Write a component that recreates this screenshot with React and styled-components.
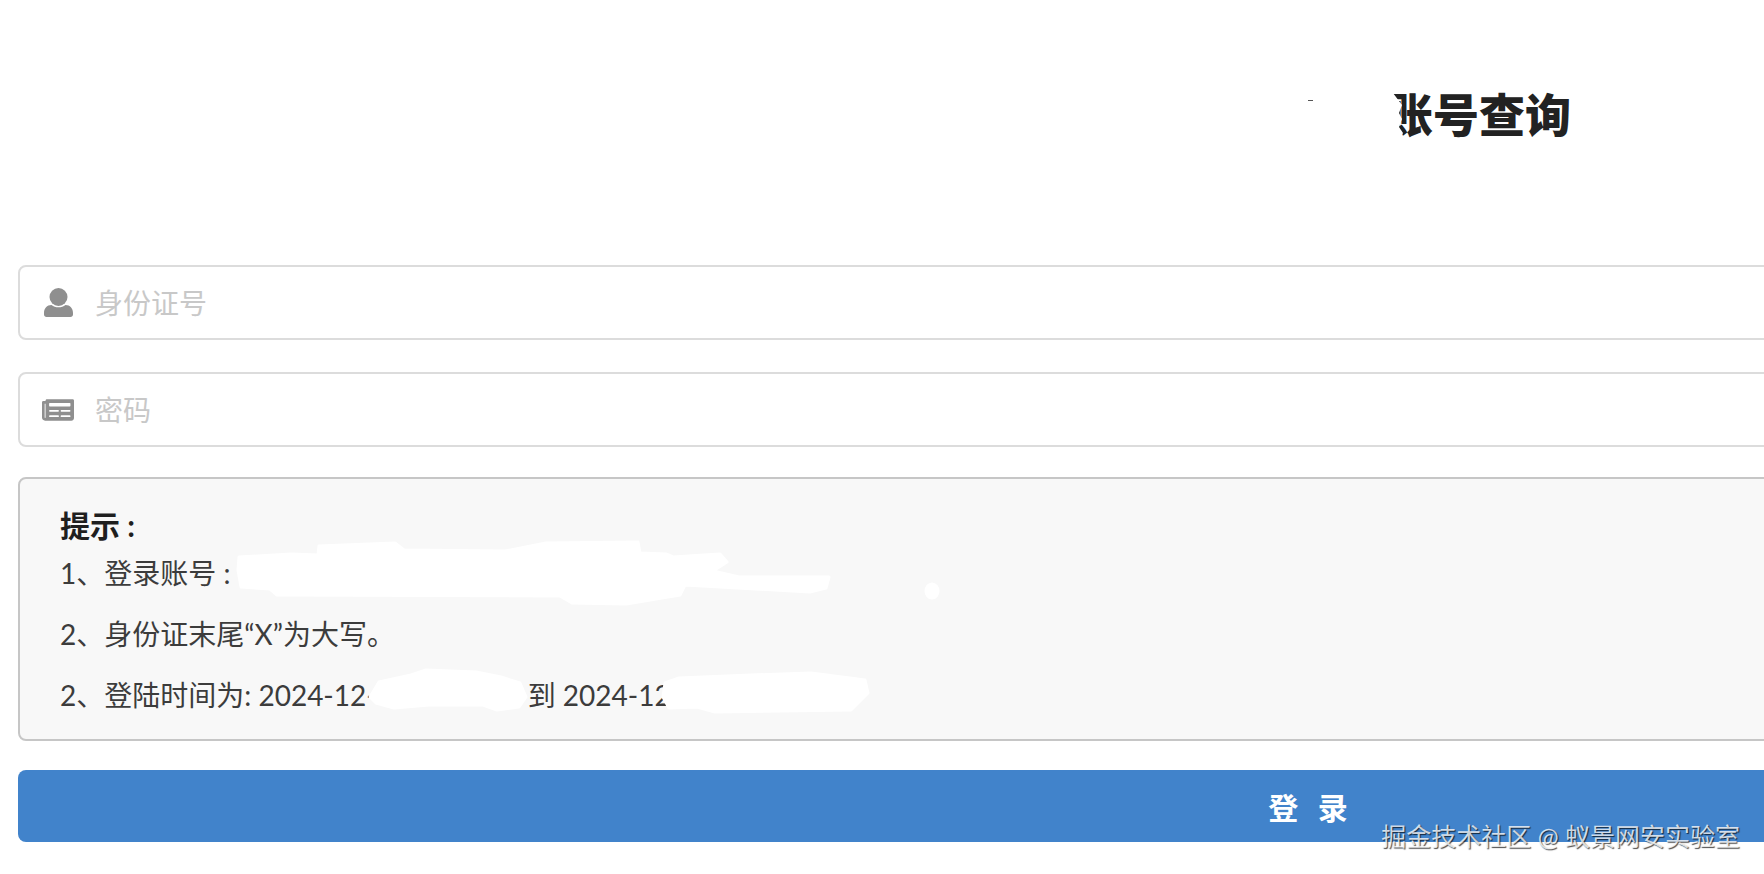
import React from "react";
import styled, { createGlobalStyle } from "styled-components";
import { FaNewspaper } from "react-icons/fa";

const FONT = `"Lato", "Noto Sans CJK SC", sans-serif`;

const GlobalStyle = createGlobalStyle`
  html, body {
    margin: 0;
    padding: 0;
    background: #fff;
    overflow: hidden;
  }
`;

const UserIcon = () => (
  <svg width="29" height="29" viewBox="0 0 29 29" fill="currentColor">
    <path d="M0 25C0 20.500 3 17 7.500 17C9.500 18.500 11.800 19.300 14.500 19.300C17.200 19.300 19.500 18.500 21.500 17C26 17 29 20.500 29 25V26.500C29 27.900 27.900 29 26.500 29H2.500C1.100 29 0 27.900 0 26.500Z" />
    <circle cx="14.500" cy="9" r="9" />
  </svg>
);

const App = () => {
  return (
    <Page>
      <GlobalStyle />
      <Form>
        <Title>
          账号查询
          <TitleMask viewBox="0 0 24 64" aria-hidden="true">
            <path d="M0 0H24V10H6L15 22L12 30L15 36L12 44L16 50L13 56L17 64H0Z" />
          </TitleMask>
          <Speck />
        </Title>
        <Field>
          <IconSlot>
            <UserIcon />
          </IconSlot>
          <Input placeholder="身份证号" />
        </Field>
        <Field>
          <IconSlot>
            <FaNewspaper size={32} />
          </IconSlot>
          <Input placeholder="密码" />
        </Field>
        <Message>
          <MessageHeader>提示 :</MessageHeader>
          <Line>1、登录账号 :</Line>
          <Line>2、身份证末尾“X”为大写。</Line>
          <Line>
            2、登陆时间为: 2024-12-
            <Gap />
            到 2024-12
          </Line>
          <Redactions viewBox="18 477 1000 264" aria-hidden="true">
            <path d="M239 557L291 554L318 555L319 546L395 543L404 550L505 551L546 543L638 542L640 553L666 554L673 557L720 554L727 562L713 571L739 577L829 577L826 588L810 592L685 585L680 595L626 604L572 603L560 596L277 595L270 589L241 587L238 570Z" />
            <ellipse cx="932" cy="591" rx="6" ry="7" />
            <path d="M370 697L379 682L411 675L426 670L476 672L501 677L520 683L526 697L519 707L497 710L483 705L429 705L394 708L376 703Z" />
            <path d="M663 697L665 683L679 678L751 675L811 673L865 680L868 693L851 710L715 712L697 707L669 708Z" />
          </Redactions>
        </Message>
        <SubmitButton type="button">登 录</SubmitButton>
      </Form>
      <Watermark>掘金技术社区 @ 蚁景网安实验室</Watermark>
    </Page>
  );
};

const Page = styled.div`
  position: relative;
  width: 1764px;
  height: 874px;
  overflow: hidden;
  padding: 83px 0 0 18px;
  box-sizing: border-box;
  font-family: ${FONT};
`;

const Form = styled.form`
  width: 2580px;
  display: flex;
  flex-direction: column;
  gap: 30px;
`;

const Title = styled.h1`
  position: relative;
  margin: 0 0 88px;
  padding-left: 1369px;
  font-size: 46px;
  line-height: 64px;
  font-weight: 900;
  color: #222;
`;

const TitleMask = styled.svg`
  position: absolute;
  left: 1369px;
  top: 0;
  width: 24px;
  height: 64px;
  fill: #fff;
`;

const Speck = styled.span`
  position: absolute;
  left: 1290px;
  top: 17px;
  width: 5px;
  height: 1px;
  background: #555;
`;

const Field = styled.label`
  display: flex;
  align-items: center;
  height: 75px;
  box-sizing: border-box;
  border: 2px solid #dcdcdc;
  border-radius: 8px;
  background: #fff;
  & + & {
    margin-top: 2px;
  }
`;

const IconSlot = styled.span`
  flex: none;
  width: 73px;
  display: flex;
  justify-content: center;
  padding-left: 3px;
  box-sizing: border-box;
  color: #8f8f8f;
`;

const Input = styled.input`
  flex: 1;
  border: 0;
  outline: 0;
  background: transparent;
  font-family: ${FONT};
  font-size: 28px;
  color: #333;
  &::placeholder {
    color: #c8c8c8;
    opacity: 1;
  }
`;

const Message = styled.div`
  position: relative;
  height: 264px;
  box-sizing: border-box;
  padding: 26px 40px;
  border: 2px solid #c6c6c6;
  border-radius: 8px;
  background: #f8f8f8;
  color: #3c3c3c;
  font-size: 28px;
  line-height: 40px;
`;

const MessageHeader = styled.div`
  font-size: 30px;
  font-weight: 700;
  color: #1f1f1f;
`;

const Line = styled.p`
  margin: 8px 0 21px;
  & + & {
    margin-top: 0;
  }
`;

const Gap = styled.span`
  display: inline-block;
  width: 151px;
`;

const Redactions = styled.svg`
  position: absolute;
  left: -2px;
  top: -2px;
  width: 1000px;
  height: 264px;
  fill: #fff;
  stroke: #fff;
  stroke-width: 3px;
  stroke-linejoin: round;
`;

const SubmitButton = styled.button`
  height: 72px;
  margin-top: -1px;
  border: 0;
  border-radius: 8px;
  background: #4183cb;
  color: #fff;
  font-family: ${FONT};
  font-size: 30px;
  font-weight: 700;
  word-spacing: 12px;
`;

const Watermark = styled.div`
  position: absolute;
  right: 24px;
  bottom: 20px;
  font-size: 25px;
  line-height: 36px;
  color: rgba(255, 255, 255, 0.78);
  text-shadow: 1px 1px 1px rgba(0, 0, 0, 0.7);
`;

export default App;
